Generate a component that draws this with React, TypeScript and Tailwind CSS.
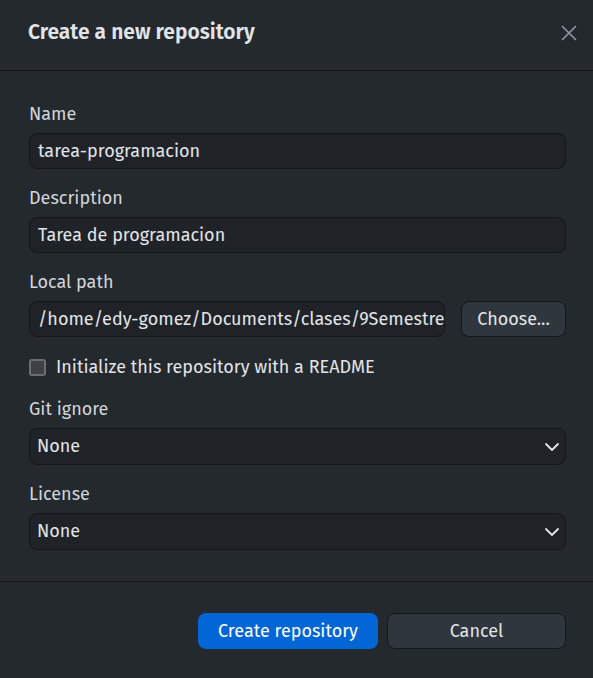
import { X } from 'lucide-react'

const font = { fontFamily: '"Fira Sans", "Noto Sans", "Open Sans", sans-serif' }

function Field({ label, children }: { label: string; children: React.ReactNode }) {
  return (
    <div>
      <div className="h-[22px] leading-[22px] text-[18px] text-[#d1d5da]">{label}</div>
      <div className="mt-[8px]">{children}</div>
    </div>
  )
}

function Select({ value }: { value: string }) {
  return (
    <div className="flex h-[37px] items-center justify-between rounded-lg border border-[#141618] bg-[#1f2327] pl-[7px] pr-[5px] text-[18px] text-[#e1e4e8]">
      <span>{value}</span>
      <svg width="16" height="10" viewBox="0 0 16 10" fill="none" className="mt-[1px]">
        <path d="M2 2 L8 8 L14 2" stroke="#e1e4e8" strokeWidth="1.8" strokeLinecap="round" strokeLinejoin="round" />
      </svg>
    </div>
  )
}

export default function App() {
  return (
    <div className="h-[678px] w-[593px] bg-[#24292e] text-[#e1e4e8]" style={font}>
      <div className="flex h-[71px] items-center justify-between border-b border-[#141618] pl-[28px] pr-[11px]">
        <h1 className="-mt-[5px] text-[21px] font-semibold text-[#e1e4e8]">Create a new repository</h1>
        <X className="-mt-[4px] h-[26px] w-[26px] text-[#8d949c]" strokeWidth={1.6} />
      </div>

      <div className="flex flex-col gap-[18px] pl-[29px] pr-[27px] pt-[32px]">
        <Field label="Name">
          <div className="flex h-[36px] items-center rounded-lg border border-[#141618] bg-[#1f2327] px-[8px] text-[18px]">
            tarea-programacion
          </div>
        </Field>
        <Field label="Description">
          <div className="flex h-[36px] items-center rounded-lg border border-[#141618] bg-[#1f2327] px-[8px] text-[18px]">
            Tarea de programacion
          </div>
        </Field>
        <Field label="Local path">
          <div className="flex gap-[16px]">
            <div className="flex h-[36px] min-w-0 flex-1 items-center overflow-hidden whitespace-nowrap rounded-lg border border-[#141618] bg-[#1f2327] px-[8px] text-[18px]">
              /home/edy-gomez/Documents/clases/9Semestre
            </div>
            <button className="h-[36px] w-[105px] rounded-lg border border-[#141618] bg-[#2f363d] text-[18px] text-[#e1e4e8]">
              Choose...
            </button>
          </div>
        </Field>
        <div className="mt-[4px] flex h-[17px] items-center gap-[10px] text-[18px] text-[#e1e4e8]">
          <span className="h-[17px] w-[17px] shrink-0 rounded-[3px] border-2 border-[#696e74] bg-[#3d4044]" />
          <span>Initialize this repository with a README</span>
        </div>
        <div className="mt-[4px]">
          <Field label="Git ignore">
            <Select value="None" />
          </Field>
        </div>
        <Field label="License">
          <Select value="None" />
        </Field>
      </div>

      <div className="mt-[31px] flex justify-end gap-[9px] border-t border-[#141618] pl-[29px] pr-[27px] pt-[31px]">
        <button className="h-[36px] w-[180px] rounded-lg bg-[#0366d6] text-[18px] text-white">
          Create repository
        </button>
        <button className="h-[36px] w-[179px] rounded-lg border border-[#141618] bg-[#2f363d] text-[18px] text-[#e1e4e8]">
          Cancel
        </button>
      </div>
    </div>
  )
}
